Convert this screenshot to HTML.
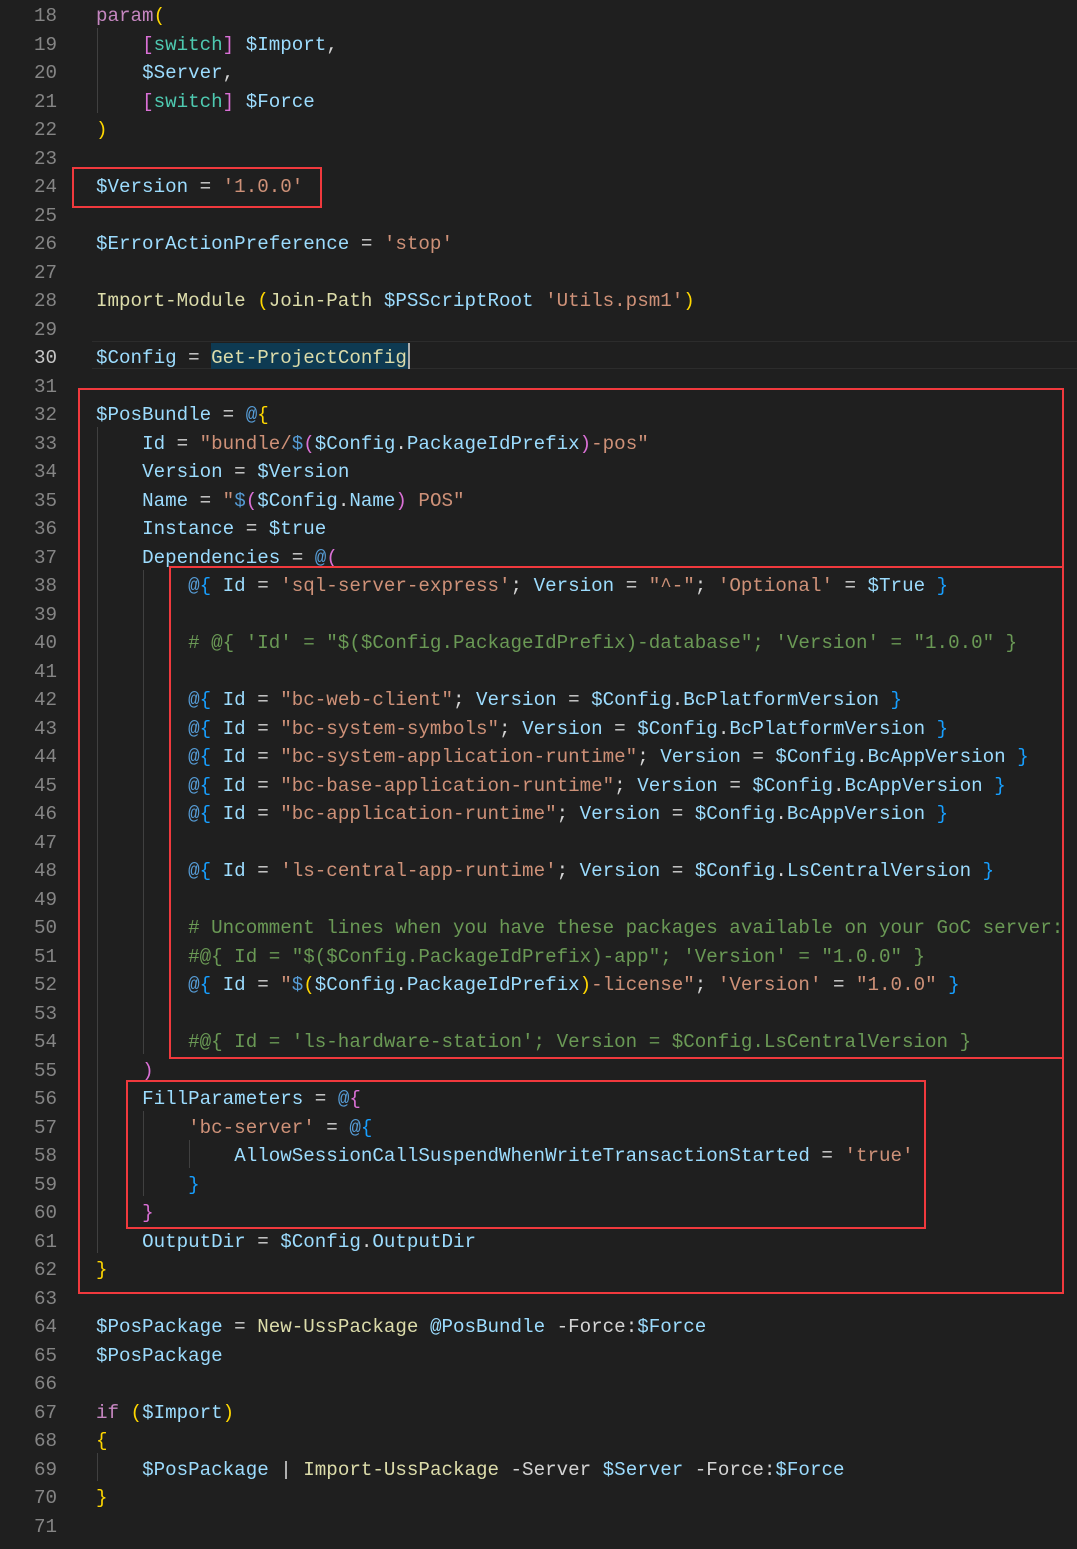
<!DOCTYPE html>
<html><head><meta charset="utf-8"><style>
html,body{margin:0;padding:0;background:#1f1f1f;width:1077px;height:1549px;overflow:hidden;}
#ed{position:relative;width:1077px;height:1549px;font-family:"Liberation Mono",monospace;font-size:19.2px;}
.ln{position:absolute;left:0;width:57px;text-align:right;color:#858585;}
.cd{position:absolute;left:96px;white-space:pre;color:#d4d4d4;}
.row{position:absolute;left:0;height:28.5px;line-height:28.5px;width:1077px;margin-top:2px;}
.v{color:#9cdcfe}.s{color:#ce9178}.k{color:#c586c0}.f{color:#dcdcaa}.c{color:#6a9955}.a{color:#569cd6}
.y{color:#ffd700}.p{color:#da70d6}.b{color:#179fff}.t{color:#4ec9b0}
.g{position:absolute;width:1px;background:#404040;}
.box{position:absolute;border:2.5px solid #f0393d;box-sizing:border-box;}
</style></head><body><div id="ed">
<div style="position:absolute;left:92px;width:985px;top:341px;height:25.5px;border-top:1.5px solid #2c2c2c;border-bottom:1.5px solid #2c2c2c"></div>
<div style="position:absolute;left:211px;top:343px;width:197px;height:26px;background:#0e3a52"></div>
<div style="position:absolute;left:408px;top:343px;width:2px;height:26px;background:#aeafad"></div>

<div class="g" style="left:97px;top:28px;height:85px"></div>
<div class="g" style="left:97px;top:427px;height:826px"></div>
<div class="g" style="left:143px;top:570px;height:484px"></div>
<div class="g" style="left:143px;top:1111px;height:85px"></div>
<div class="g" style="left:189px;top:1140px;height:28px"></div>
<div class="g" style="left:97px;top:1453px;height:28px"></div>

<div class="row" style="top:0px"><span class="ln">18</span><span class="cd"><span class="k">param</span><span class="y">(</span></span></div>
<div class="row" style="top:28.5px"><span class="ln">19</span><span class="cd">    <span class="p">[</span><span class="t">switch</span><span class="p">]</span> <span class="v">$Import</span>,</span></div>
<div class="row" style="top:57px"><span class="ln">20</span><span class="cd">    <span class="v">$Server</span>,</span></div>
<div class="row" style="top:85.5px"><span class="ln">21</span><span class="cd">    <span class="p">[</span><span class="t">switch</span><span class="p">]</span> <span class="v">$Force</span></span></div>
<div class="row" style="top:114px"><span class="ln">22</span><span class="cd"><span class="y">)</span></span></div>
<div class="row" style="top:142.5px"><span class="ln">23</span></div>
<div class="row" style="top:171px"><span class="ln">24</span><span class="cd"><span class="v">$Version</span> = <span class="s">'1.0.0'</span></span></div>
<div class="row" style="top:199.5px"><span class="ln">25</span></div>
<div class="row" style="top:228px"><span class="ln">26</span><span class="cd"><span class="v">$ErrorActionPreference</span> = <span class="s">'stop'</span></span></div>
<div class="row" style="top:256.5px"><span class="ln">27</span></div>
<div class="row" style="top:285px"><span class="ln">28</span><span class="cd"><span class="f">Import-Module</span> <span class="y">(</span><span class="f">Join-Path</span> <span class="v">$PSScriptRoot</span> <span class="s">'Utils.psm1'</span><span class="y">)</span></span></div>
<div class="row" style="top:313.5px"><span class="ln">29</span></div>
<div class="row" style="top:342px"><span class="ln" style="color:#c6c6c6">30</span><span class="cd"><span class="v">$Config</span> = <span class="f">Get-ProjectConfig</span></span></div>
<div class="row" style="top:370.5px"><span class="ln">31</span></div>
<div class="row" style="top:399px"><span class="ln">32</span><span class="cd"><span class="v">$PosBundle</span> = <span class="a">@</span><span class="y">{</span></span></div>
<div class="row" style="top:427.5px"><span class="ln">33</span><span class="cd">    <span class="v">Id</span> = <span class="s">"bundle/</span><span class="a">$</span><span class="p">(</span><span class="v">$Config</span>.<span class="v">PackageIdPrefix</span><span class="p">)</span><span class="s">-pos"</span></span></div>
<div class="row" style="top:456px"><span class="ln">34</span><span class="cd">    <span class="v">Version</span> = <span class="v">$Version</span></span></div>
<div class="row" style="top:484.5px"><span class="ln">35</span><span class="cd">    <span class="v">Name</span> = <span class="s">"</span><span class="a">$</span><span class="p">(</span><span class="v">$Config</span>.<span class="v">Name</span><span class="p">)</span><span class="s"> POS"</span></span></div>
<div class="row" style="top:513px"><span class="ln">36</span><span class="cd">    <span class="v">Instance</span> = <span class="v">$true</span></span></div>
<div class="row" style="top:541.5px"><span class="ln">37</span><span class="cd">    <span class="v">Dependencies</span> = <span class="a">@</span><span class="p">(</span></span></div>
<div class="row" style="top:570px"><span class="ln">38</span><span class="cd">        <span class="a">@</span><span class="b">{</span> <span class="v">Id</span> = <span class="s">'sql-server-express'</span>; <span class="v">Version</span> = <span class="s">"^-"</span>; <span class="s">'Optional'</span> = <span class="v">$True</span> <span class="b">}</span></span></div>
<div class="row" style="top:598.5px"><span class="ln">39</span></div>
<div class="row" style="top:627px"><span class="ln">40</span><span class="cd">        <span class="c"># @{ 'Id' = "$($Config.PackageIdPrefix)-database"; 'Version' = "1.0.0" }</span></span></div>
<div class="row" style="top:655.5px"><span class="ln">41</span></div>
<div class="row" style="top:684px"><span class="ln">42</span><span class="cd">        <span class="a">@</span><span class="b">{</span> <span class="v">Id</span> = <span class="s">"bc-web-client"</span>; <span class="v">Version</span> = <span class="v">$Config</span>.<span class="v">BcPlatformVersion</span> <span class="b">}</span></span></div>
<div class="row" style="top:712.5px"><span class="ln">43</span><span class="cd">        <span class="a">@</span><span class="b">{</span> <span class="v">Id</span> = <span class="s">"bc-system-symbols"</span>; <span class="v">Version</span> = <span class="v">$Config</span>.<span class="v">BcPlatformVersion</span> <span class="b">}</span></span></div>
<div class="row" style="top:741px"><span class="ln">44</span><span class="cd">        <span class="a">@</span><span class="b">{</span> <span class="v">Id</span> = <span class="s">"bc-system-application-runtime"</span>; <span class="v">Version</span> = <span class="v">$Config</span>.<span class="v">BcAppVersion</span> <span class="b">}</span></span></div>
<div class="row" style="top:769.5px"><span class="ln">45</span><span class="cd">        <span class="a">@</span><span class="b">{</span> <span class="v">Id</span> = <span class="s">"bc-base-application-runtime"</span>; <span class="v">Version</span> = <span class="v">$Config</span>.<span class="v">BcAppVersion</span> <span class="b">}</span></span></div>
<div class="row" style="top:798px"><span class="ln">46</span><span class="cd">        <span class="a">@</span><span class="b">{</span> <span class="v">Id</span> = <span class="s">"bc-application-runtime"</span>; <span class="v">Version</span> = <span class="v">$Config</span>.<span class="v">BcAppVersion</span> <span class="b">}</span></span></div>
<div class="row" style="top:826.5px"><span class="ln">47</span></div>
<div class="row" style="top:855px"><span class="ln">48</span><span class="cd">        <span class="a">@</span><span class="b">{</span> <span class="v">Id</span> = <span class="s">'ls-central-app-runtime'</span>; <span class="v">Version</span> = <span class="v">$Config</span>.<span class="v">LsCentralVersion</span> <span class="b">}</span></span></div>
<div class="row" style="top:883.5px"><span class="ln">49</span></div>
<div class="row" style="top:912px"><span class="ln">50</span><span class="cd">        <span class="c"># Uncomment lines when you have these packages available on your GoC server:</span></span></div>
<div class="row" style="top:940.5px"><span class="ln">51</span><span class="cd">        <span class="c">#@{ Id = "$($Config.PackageIdPrefix)-app"; 'Version' = "1.0.0" }</span></span></div>
<div class="row" style="top:969px"><span class="ln">52</span><span class="cd">        <span class="a">@</span><span class="b">{</span> <span class="v">Id</span> = <span class="s">"</span><span class="a">$</span><span class="y">(</span><span class="v">$Config</span>.<span class="v">PackageIdPrefix</span><span class="y">)</span><span class="s">-license"</span>; <span class="s">'Version'</span> = <span class="s">"1.0.0"</span> <span class="b">}</span></span></div>
<div class="row" style="top:997.5px"><span class="ln">53</span></div>
<div class="row" style="top:1026px"><span class="ln">54</span><span class="cd">        <span class="c">#@{ Id = 'ls-hardware-station'; Version = $Config.LsCentralVersion }</span></span></div>
<div class="row" style="top:1054.5px"><span class="ln">55</span><span class="cd">    <span class="p">)</span></span></div>
<div class="row" style="top:1083px"><span class="ln">56</span><span class="cd">    <span class="v">FillParameters</span> = <span class="a">@</span><span class="p">{</span></span></div>
<div class="row" style="top:1111.5px"><span class="ln">57</span><span class="cd">        <span class="s">'bc-server'</span> = <span class="a">@</span><span class="b">{</span></span></div>
<div class="row" style="top:1140px"><span class="ln">58</span><span class="cd">            <span class="v">AllowSessionCallSuspendWhenWriteTransactionStarted</span> = <span class="s">'true'</span></span></div>
<div class="row" style="top:1168.5px"><span class="ln">59</span><span class="cd">        <span class="b">}</span></span></div>
<div class="row" style="top:1197px"><span class="ln">60</span><span class="cd">    <span class="p">}</span></span></div>
<div class="row" style="top:1225.5px"><span class="ln">61</span><span class="cd">    <span class="v">OutputDir</span> = <span class="v">$Config</span>.<span class="v">OutputDir</span></span></div>
<div class="row" style="top:1254px"><span class="ln">62</span><span class="cd"><span class="y">}</span></span></div>
<div class="row" style="top:1282.5px"><span class="ln">63</span></div>
<div class="row" style="top:1311px"><span class="ln">64</span><span class="cd"><span class="v">$PosPackage</span> = <span class="f">New-UssPackage</span> <span class="v">@PosBundle</span> -Force:<span class="v">$Force</span></span></div>
<div class="row" style="top:1339.5px"><span class="ln">65</span><span class="cd"><span class="v">$PosPackage</span></span></div>
<div class="row" style="top:1368px"><span class="ln">66</span></div>
<div class="row" style="top:1396.5px"><span class="ln">67</span><span class="cd"><span class="k">if</span> <span class="y">(</span><span class="v">$Import</span><span class="y">)</span></span></div>
<div class="row" style="top:1425px"><span class="ln">68</span><span class="cd"><span class="y">{</span></span></div>
<div class="row" style="top:1453.5px"><span class="ln">69</span><span class="cd">    <span class="v">$PosPackage</span> | <span class="f">Import-UssPackage</span> -Server <span class="v">$Server</span> -Force:<span class="v">$Force</span></span></div>
<div class="row" style="top:1482px"><span class="ln">70</span><span class="cd"><span class="y">}</span></span></div>
<div class="row" style="top:1510.5px"><span class="ln">71</span></div>

<div class="box" style="left:72px;top:167px;width:250px;height:41px"></div>
<div class="box" style="left:78px;top:388px;width:986px;height:906px"></div>
<div class="box" style="left:169px;top:566px;width:895px;height:493px"></div>
<div class="box" style="left:126px;top:1080px;width:800px;height:149px"></div>
</div></body></html>
